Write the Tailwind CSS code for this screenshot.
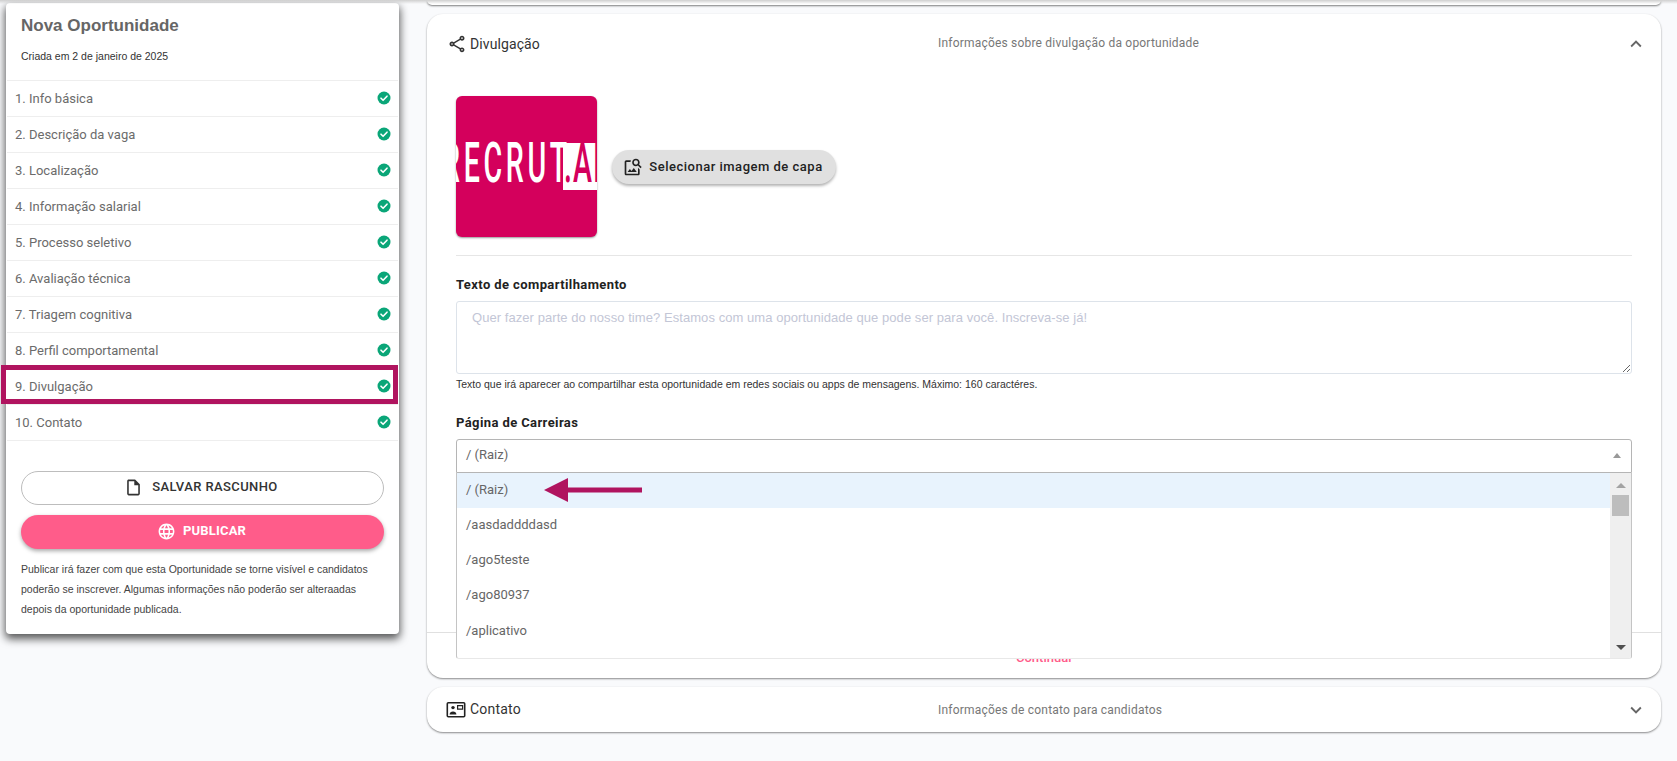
<!DOCTYPE html>
<html lang="pt-BR">
  <head>
    <meta charset="UTF-8" />
    <title>Nova Oportunidade</title>
    <script src="https://cdn.jsdelivr.net/npm/@tailwindcss/browser@4"></script>
  </head>

  <body class="h-[761px] overflow-hidden bg-[#f9fafc] font-['Roboto',sans-serif]">
    <div class="relative flex h-full items-start">
      <!-- sombra da barra do topo -->
      <div class="absolute left-0 right-0 top-0 z-20 h-[4px] bg-linear-to-b from-[#cfcfcf] to-transparent"></div>

      <!-- Menu lateral -->
      <aside class="relative ml-[6px] mt-[3px] w-[393px] rounded-[4px] bg-white shadow-[0_4px_8px_1px_rgba(0,0,0,0.65)]">
        <div class="h-[77px] pl-[15px] pt-[13px]">
          <h1 class="font-['Liberation_Sans',sans-serif] text-[17px] font-bold leading-[20px] text-[#666666]">Nova Oportunidade</h1>
          <p class="mt-[12px] font-['Liberation_Sans',sans-serif] text-[10.5px] leading-[16px] text-[#333333]">Criada em 2 de janeiro de 2025</p>
        </div>

        <ul class="mx-px border-t border-[#eeeeee]">
          <li class="flex h-[36px] items-center justify-between border-b border-[#eeeeee] pl-[8px] pr-[7px] text-[13px] text-[#6b6b6b]">
            <span>1. Info básica</span>
            <svg class="h-[14px] w-[14px] -translate-y-px" viewBox="0 0 14 14"><circle cx="7" cy="7" r="6.5" fill="#0aa678" /><path d="M4 7.2l2.1 2.1L10 5.2" fill="none" stroke="#fff" stroke-width="1.6" stroke-linecap="round" stroke-linejoin="round" /></svg>
          </li>
          <li class="flex h-[36px] items-center justify-between border-b border-[#eeeeee] pl-[8px] pr-[7px] text-[13px] text-[#6b6b6b]">
            <span>2. Descrição da vaga</span>
            <svg class="h-[14px] w-[14px] -translate-y-px" viewBox="0 0 14 14"><circle cx="7" cy="7" r="6.5" fill="#0aa678" /><path d="M4 7.2l2.1 2.1L10 5.2" fill="none" stroke="#fff" stroke-width="1.6" stroke-linecap="round" stroke-linejoin="round" /></svg>
          </li>
          <li class="flex h-[36px] items-center justify-between border-b border-[#eeeeee] pl-[8px] pr-[7px] text-[13px] text-[#6b6b6b]">
            <span>3. Localização</span>
            <svg class="h-[14px] w-[14px] -translate-y-px" viewBox="0 0 14 14"><circle cx="7" cy="7" r="6.5" fill="#0aa678" /><path d="M4 7.2l2.1 2.1L10 5.2" fill="none" stroke="#fff" stroke-width="1.6" stroke-linecap="round" stroke-linejoin="round" /></svg>
          </li>
          <li class="flex h-[36px] items-center justify-between border-b border-[#eeeeee] pl-[8px] pr-[7px] text-[13px] text-[#6b6b6b]">
            <span>4. Informação salarial</span>
            <svg class="h-[14px] w-[14px] -translate-y-px" viewBox="0 0 14 14"><circle cx="7" cy="7" r="6.5" fill="#0aa678" /><path d="M4 7.2l2.1 2.1L10 5.2" fill="none" stroke="#fff" stroke-width="1.6" stroke-linecap="round" stroke-linejoin="round" /></svg>
          </li>
          <li class="flex h-[36px] items-center justify-between border-b border-[#eeeeee] pl-[8px] pr-[7px] text-[13px] text-[#6b6b6b]">
            <span>5. Processo seletivo</span>
            <svg class="h-[14px] w-[14px] -translate-y-px" viewBox="0 0 14 14"><circle cx="7" cy="7" r="6.5" fill="#0aa678" /><path d="M4 7.2l2.1 2.1L10 5.2" fill="none" stroke="#fff" stroke-width="1.6" stroke-linecap="round" stroke-linejoin="round" /></svg>
          </li>
          <li class="flex h-[36px] items-center justify-between border-b border-[#eeeeee] pl-[8px] pr-[7px] text-[13px] text-[#6b6b6b]">
            <span>6. Avaliação técnica</span>
            <svg class="h-[14px] w-[14px] -translate-y-px" viewBox="0 0 14 14"><circle cx="7" cy="7" r="6.5" fill="#0aa678" /><path d="M4 7.2l2.1 2.1L10 5.2" fill="none" stroke="#fff" stroke-width="1.6" stroke-linecap="round" stroke-linejoin="round" /></svg>
          </li>
          <li class="flex h-[36px] items-center justify-between border-b border-[#eeeeee] pl-[8px] pr-[7px] text-[13px] text-[#6b6b6b]">
            <span>7. Triagem cognitiva</span>
            <svg class="h-[14px] w-[14px] -translate-y-px" viewBox="0 0 14 14"><circle cx="7" cy="7" r="6.5" fill="#0aa678" /><path d="M4 7.2l2.1 2.1L10 5.2" fill="none" stroke="#fff" stroke-width="1.6" stroke-linecap="round" stroke-linejoin="round" /></svg>
          </li>
          <li class="flex h-[36px] items-center justify-between border-b border-[#eeeeee] pl-[8px] pr-[7px] text-[13px] text-[#6b6b6b]">
            <span>8. Perfil comportamental</span>
            <svg class="h-[14px] w-[14px] -translate-y-px" viewBox="0 0 14 14"><circle cx="7" cy="7" r="6.5" fill="#0aa678" /><path d="M4 7.2l2.1 2.1L10 5.2" fill="none" stroke="#fff" stroke-width="1.6" stroke-linecap="round" stroke-linejoin="round" /></svg>
          </li>
          <li class="relative flex h-[36px] items-center justify-between border-b border-[#eeeeee] pl-[8px] pr-[7px] text-[13px] text-[#6b6b6b]">
            <span>9. Divulgação</span>
            <svg class="h-[14px] w-[14px] -translate-y-px" viewBox="0 0 14 14"><circle cx="7" cy="7" r="6.5" fill="#0aa678" /><path d="M4 7.2l2.1 2.1L10 5.2" fill="none" stroke="#fff" stroke-width="1.6" stroke-linecap="round" stroke-linejoin="round" /></svg>
            <!-- destaque do passo atual -->
            <div class="absolute left-[-6px] top-[-4px] h-[39px] w-[397px] border-[5px] border-[#b0145f]"></div>
          </li>
          <li class="flex h-[36px] items-center justify-between border-b border-[#eeeeee] pl-[8px] pr-[7px] text-[13px] text-[#6b6b6b]">
            <span>10. Contato</span>
            <svg class="h-[14px] w-[14px] -translate-y-px" viewBox="0 0 14 14"><circle cx="7" cy="7" r="6.5" fill="#0aa678" /><path d="M4 7.2l2.1 2.1L10 5.2" fill="none" stroke="#fff" stroke-width="1.6" stroke-linecap="round" stroke-linejoin="round" /></svg>
          </li>
        </ul>

        <div class="px-[15px] pb-[15px] pt-[30px]">
          <button class="flex h-[34px] w-[363px] items-center justify-center gap-[9px] rounded-full border border-[#bdbdbd] bg-white pb-[2px] pr-[3px] text-[13px] font-medium tracking-[0.4px] text-[#333333]">
            <svg class="h-[19px] w-[19px]" viewBox="0 0 24 24" fill="#333333"><path d="M14 2H6c-1.1 0-1.99.9-1.99 2L4 20c0 1.1.89 2 1.99 2H18c1.1 0 2-.9 2-2V8l-6-6zM6 20V4h7v5h5v11H6z" /></svg>
            SALVAR RASCUNHO
          </button>
          <button class="mt-[10px] flex h-[34px] w-[363px] items-center justify-center gap-[7px] rounded-full bg-[#ff5c8a] pb-[2px] pr-[2px] text-[13px] font-bold tracking-[0.2px] text-white shadow-[0_2px_4px_rgba(0,0,0,0.35)]">
            <svg class="h-[19px] w-[19px]" viewBox="0 0 24 24" fill="#ffffff"><path d="M11.99 2C6.47 2 2 6.48 2 12s4.47 10 9.99 10C17.52 22 22 17.52 22 12S17.52 2 11.99 2zm6.93 6h-2.95c-.32-1.25-.78-2.45-1.38-3.56 1.84.63 3.37 1.91 4.33 3.56zM12 4.04c.83 1.2 1.48 2.53 1.91 3.96h-3.82c.43-1.43 1.08-2.76 1.91-3.96zM4.26 14C4.1 13.36 4 12.69 4 12s.1-1.36.26-2h3.38c-.08.66-.14 1.32-.14 2s.06 1.34.14 2H4.26zm.82 2h2.95c.32 1.25.78 2.45 1.38 3.56-1.84-.63-3.37-1.9-4.33-3.56zm2.95-8H5.08c.96-1.66 2.49-2.93 4.33-3.56C8.81 5.55 8.35 6.75 8.03 8zM12 19.96c-.83-1.2-1.48-2.53-1.91-3.96h3.82c-.43 1.43-1.08 2.76-1.91 3.96zM14.34 14H9.66c-.09-.66-.16-1.32-.16-2s.07-1.35.16-2h4.68c.09.65.16 1.32.16 2s-.07 1.34-.16 2zm.25 5.56c.6-1.11 1.06-2.31 1.38-3.56h2.95c-.96 1.65-2.49 2.93-4.33 3.56zM16.36 14c.08-.66.14-1.32.14-2s-.06-1.34-.14-2h3.38c.16.64.26 1.31.26 2s-.1 1.36-.26 2h-3.38z" /></svg>
            PUBLICAR
          </button>
          <p class="mt-[10px] font-['Liberation_Sans',sans-serif] text-[10.5px] leading-[20px] text-[#444444]">
            Publicar irá fazer com que esta Oportunidade se torne visível e candidatos poderão se inscrever. Algumas informações não poderão ser alteraadas depois da oportunidade publicada.
          </p>
        </div>
      </aside>

      <!-- Coluna principal -->
      <main class="ml-[28px] w-[1234px]">
        <div class="h-[5px] rounded-b-[16px] bg-white shadow-[0_1px_2px_rgba(0,0,0,0.5)]"></div>

        <!-- Divulgação -->
        <section class="relative mt-[9px] h-[664px] rounded-[16px] bg-white shadow-[0_1px_2px_rgba(0,0,0,0.45)]">
          <header class="flex h-[60px] items-center pl-[20px] pr-[14px]">
            <div class="flex w-[491px] items-center gap-[3px] text-[14px] tracking-[0.1px] text-[#333333]">
              <svg class="h-[20px] w-[20px]" viewBox="0 0 24 24" fill="#333333"><path d="M18 16.08c-.76 0-1.44.3-1.96.77L8.91 12.7c.05-.23.09-.46.09-.7s-.04-.47-.09-.7l7.05-4.11c.54.5 1.25.81 2.04.81 1.66 0 3-1.34 3-3s-1.34-3-3-3-3 1.34-3 3c0 .24.04.47.09.7L8.04 9.81C7.5 9.31 6.79 9 6 9c-1.66 0-3 1.34-3 3s1.34 3 3 3c.79 0 1.5-.31 2.04-.81l7.12 4.16c-.05.21-.08.43-.08.65 0 1.61 1.31 2.92 2.92 2.92 1.61 0 2.92-1.31 2.92-2.92s-1.31-2.92-2.92-2.92zM18 4c.55 0 1 .45 1 1s-.45 1-1 1-1-.45-1-1 .45-1 1-1zM6 13c-.55 0-1-.45-1-1s.45-1 1-1 1 .45 1 1-.45 1-1 1zm12 7.02c-.55 0-1-.45-1-1s.45-1 1-1 1 .45 1 1-.45 1-1 1z" /></svg>
              <span>Divulgação</span>
            </div>
            <span class="-translate-y-px text-[12px] tracking-[0.2px] text-[#777777]">Informações sobre divulgação da oportunidade</span>
            <svg class="ml-auto h-[22px] w-[22px]" viewBox="0 0 24 24" fill="#666666"><path d="M7.41 15.41L12 10.83l4.59 4.58L18 14l-6-6-6 6z" /></svg>
          </header>

          <div class="px-[29px]">
            <div class="flex items-center gap-[15px] pt-[22px]">
              <!-- capa -->
              <div class="relative h-[141px] w-[141px] overflow-hidden rounded-[6px] bg-[#d4005c] shadow-[0_1px_2px_rgba(0,0,0,0.4)]">
                <div class="absolute left-[-14px] top-[35px] origin-left scale-x-[0.52] whitespace-nowrap text-[55px] font-medium leading-[64px] tracking-[7px] text-white">RECRUT</div>
                <div class="absolute left-[107px] top-[47px] h-[47px] w-[34px] overflow-hidden bg-white">
                  <span class="absolute left-[1px] top-[-12px] origin-left scale-x-[0.52] whitespace-nowrap text-[55px] font-medium leading-[64px] tracking-[2px] text-[#d4005c]">.AI</span>
                </div>
              </div>
              <button class="flex h-[34px] w-[224px] items-center justify-center gap-[6px] rounded-full bg-[#e0e0e0] pr-[2px] text-[13px] font-medium tracking-[0.5px] text-[#222222] shadow-[0_2px_3px_rgba(0,0,0,0.3)]">
                <svg class="h-[20px] w-[20px]" viewBox="0 0 24 24" fill="#222222"><path d="M18 13v7H4V6h5.02c.05-.71.22-1.38.48-2H4c-1.1 0-2 .9-2 2v14c0 1.1.9 2 2 2h14c1.1 0 2-.9 2-2v-5l-2-2zm-1.5 5h-11l2.75-3.53 1.96 2.36 2.75-3.54L16.5 18zm2.8-9.11c.44-.7.7-1.51.7-2.39C20 4.01 17.99 2 15.5 2S11 4.01 11 6.5s2.01 4.5 4.49 4.5c.88 0 1.7-.26 2.39-.7L21 13.42 22.42 12 19.3 8.89zM15.5 9C14.12 9 13 7.88 13 6.5S14.12 4 15.5 4 18 5.12 18 6.5 16.88 9 15.5 9z" /></svg>
                Selecionar imagem de capa
              </button>
            </div>

            <hr class="mt-[18px] border-[#e6e6e6]" />

            <label class="mt-[20px] block text-[13px] font-bold leading-[18px] tracking-[0.4px] text-[#222222]">Texto de compartilhamento</label>
            <textarea class="mt-[7px] block h-[73px] w-full resize-y rounded-[3px] border border-[#dde3ea] px-[15px] py-[6px] font-['Liberation_Sans',sans-serif] text-[13px] leading-[20px] tracking-[0.06px] placeholder:text-[#c3c6d6]" placeholder="Quer fazer parte do nosso time? Estamos com uma oportunidade que pode ser para você. Inscreva-se já!"></textarea>
            <p class="mt-[3px] font-['Liberation_Sans',sans-serif] text-[10.5px] leading-[14px] text-[#333333]">Texto que irá aparecer ao compartilhar esta oportunidade em redes sociais ou apps de mensagens. Máximo: 160 caractéres.</p>

            <label class="mt-[23px] block text-[13px] font-bold leading-[18px] tracking-[0.4px] text-[#222222]">Página de Carreiras</label>
            <div class="relative mt-[7px]">
              <div class="flex h-[34px] items-center justify-between rounded-t-[3px] border border-[#b5b5b5] pb-[2px] pl-[9px] pr-[10px] text-[13px] text-[#666666]">
                <span>/ (Raiz)</span>
                <span class="h-0 w-0 border-x-[4px] border-b-[5px] border-x-transparent border-b-[#999999]"></span>
              </div>

              <!-- lista aberta do select -->
              <div class="absolute left-0 right-0 top-[34px] z-10 flex h-[186px] overflow-hidden rounded-b-[3px] border-x border-b border-x-[#c4c4c4] border-b-[#e8e8e8] bg-white text-[13px] text-[#666666]">
                <ul class="flex-1">
                  <li class="relative flex h-[35px] items-center bg-[#e8f3fd] pb-[2px] pl-[9px]">
                    / (Raiz)
                    <svg class="absolute left-[87px] top-[5px] h-[24px] w-[100px]" viewBox="0 0 100 24"><path d="M0 12L24 0v9.5h74v5H24V24z" fill="#b0145f" /></svg>
                  </li>
                  <li class="flex h-[35px] items-center pb-[2px] pl-[9px]">/aasdaddddasd</li>
                  <li class="flex h-[35px] items-center pb-[2px] pl-[9px]">/ago5teste</li>
                  <li class="flex h-[36px] items-center pb-[2px] pl-[9px]">/ago80937</li>
                  <li class="flex h-[35px] items-center pb-[2px] pl-[9px]">/aplicativo</li>
                </ul>
                <div class="relative w-[21px] bg-[#efefef]">
                  <span class="absolute left-[6px] top-[10px] h-0 w-0 border-x-[5px] border-b-[5px] border-x-transparent border-b-[#a3a3a3]"></span>
                  <span class="absolute left-[2px] top-[22px] h-[21px] w-[17px] bg-[#bdbdbd]"></span>
                  <span class="absolute bottom-[8px] left-[6px] h-0 w-0 border-x-[5px] border-t-[5px] border-x-transparent border-t-[#505050]"></span>
                </div>
              </div>
            </div>
          </div>

          <!-- rodapé do card, quase todo coberto pela lista -->
          <div class="absolute bottom-[45px] left-0 right-0 border-t border-[#e0e0e0]"></div>
          <div class="absolute left-[589px] top-[636px] text-[13px] font-medium leading-[16px] text-[#ff5c8a]">Continuar</div>
        </section>

        <!-- Contato -->
        <section class="mt-[9px] flex h-[45px] items-center rounded-[16px] bg-white pl-[19px] pr-[14px] shadow-[0_1px_2px_rgba(0,0,0,0.45)]">
          <div class="flex w-[492px] items-center gap-[4px] text-[14px] tracking-[0.2px] text-[#333333]">
            <svg class="h-[20px] w-[20px]" viewBox="0 0 20 20">
              <rect x="1.3" y="2.8" width="17.4" height="14" rx="1" fill="none" stroke="#222222" stroke-width="1.6" />
              <circle cx="7" cy="7.6" r="1.7" fill="#222222" />
              <path d="M3.6 14.6c0-2.2 1.4-3.2 3.4-3.2s3.4 1 3.4 3.2z" fill="#222222" />
              <path d="M11.6 5.6h5v3.6h-5z" fill="none" stroke="#222222" stroke-width="1.2" />
            </svg>
            <span>Contato</span>
          </div>
          <span class="text-[12px] tracking-[0.2px] text-[#777777]">Informações de contato para candidatos</span>
          <svg class="ml-auto h-[22px] w-[22px]" viewBox="0 0 24 24" fill="#666666"><path d="M7.41 8.59L12 13.17l4.59-4.58L18 10l-6 6-6-6z" /></svg>
        </section>
      </main>
    </div>
  </body>
</html>
